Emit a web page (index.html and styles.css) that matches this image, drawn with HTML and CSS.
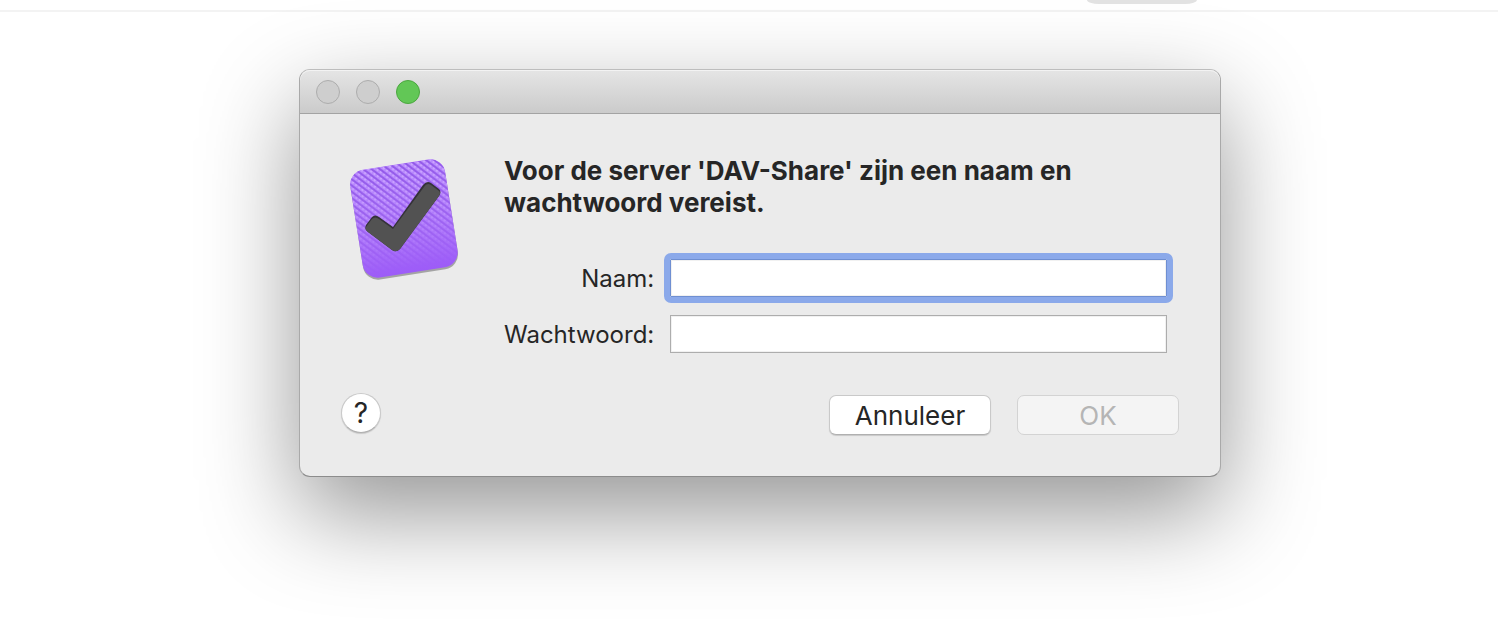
FILE: index.html
```html
<!DOCTYPE html>
<html lang="nl">
<head>
    <meta charset="UTF-8">
    <meta name="viewport" content="width=device-width, initial-scale=1.0">
    <title>Naam en wachtwoord vereist</title>
    <link rel="stylesheet" href="styles.css">
</head>
<body>
    <header class="topbar">
        <div class="tab"></div>
    </header>

    <main>
        <section class="window" role="dialog" aria-labelledby="message">
            <div class="titlebar">
                <button type="button" class="light" aria-label="Sluit" disabled></button>
                <button type="button" class="light" aria-label="Minimaliseer" disabled></button>
                <button type="button" class="light zoom" aria-label="Vergroot"></button>
            </div>

            <form class="content">
                <div class="top">
                    <svg class="app-icon" viewBox="0 0 120 130" width="120" height="130" aria-hidden="true">
                        <defs>
                            <linearGradient id="purple" x1="0" y1="0" x2="0" y2="1">
                                <stop offset="0" stop-color="#b584fb"/>
                                <stop offset="0.5" stop-color="#a96ff9"/>
                                <stop offset="1" stop-color="#9d5cf8"/>
                            </linearGradient>
                            <linearGradient id="fade" x1="0" y1="0" x2="0" y2="1">
                                <stop offset="0" stop-color="#fff"/>
                                <stop offset="0.45" stop-color="#999"/>
                                <stop offset="0.95" stop-color="#000"/>
                            </linearGradient>
                            <pattern id="weave" width="4" height="5" patternUnits="userSpaceOnUse" patternTransform="rotate(46)">
                                <rect width="4" height="2" fill="#935ae9"/>
                                <rect y="2" width="4" height="3" fill="#b88afc"/>
                                <rect y="2" width="2" height="2" fill="#cda6ff"/>
                            </pattern>
                            <mask id="fade-mask">
                                <rect x="12" y="9" width="96" height="110" fill="url(#fade)"/>
                            </mask>
                        </defs>
                        <g transform="rotate(-9 60 64)">
                            <rect x="12" y="11" width="96" height="109" rx="15" fill="#000" opacity="0.3"/>
                            <rect x="12" y="9" width="96" height="109" rx="15" fill="url(#purple)"/>
                            <rect x="12" y="9" width="96" height="109" rx="15" fill="url(#weave)" mask="url(#fade-mask)"/>
                        </g>
                        <path d="M22 70L28 62Q31 59 35 62L49 72L79 30Q83 25 87 28L95 34Q98 37 95 41L56 94Q52 98 48 95L24 77Q20 74 22 70Z" fill="#343238"/>
                        <path d="M22 72L28 64Q31 61 35 64L49 74L80 32Q83 27 87 30L95 36Q97 38 95 41L56 94Q52 98 48 95L24 77Q20 74 22 72Z" fill="#525252"/>
                    </svg>

                    <div class="details">
                        <h1 id="message">Voor de server 'DAV-Share' zijn een naam en wachtwoord vereist.</h1>
                        <div class="fields">
                            <label for="naam">Naam:</label>
                            <input type="text" id="naam" class="active">
                            <label for="wachtwoord">Wachtwoord:</label>
                            <input type="password" id="wachtwoord">
                        </div>
                    </div>
                </div>

                <div class="actions">
                    <button type="button" class="help" aria-label="Help">?</button>
                    <button type="button" class="btn">Annuleer</button>
                    <button type="submit" class="btn" disabled>OK</button>
                </div>
            </form>
        </section>
    </main>
</body>
</html>
```
FILE: styles.css
```css
* {
    box-sizing: border-box;
}

body {
    min-height: 100vh;
    margin: 0;
    background: #fff;
    color: #262626;
    font-family: Inter, "Liberation Sans", sans-serif;
}

.topbar {
    display: flex;
    justify-content: flex-end;
    height: 12px;
    padding-right: 301px;
    border-bottom: 2px solid #f3f3f3;
}

.tab {
    width: 110px;
    height: 4px;
    background: #e2e2e2;
    border-radius: 0 0 12px 12px / 0 0 4px 4px;
}

main {
    padding: 57px 277px 0 299px;
}

.window {
    border: 1px solid #a9a9a9;
    border-top-color: #bdbdbd;
    border-bottom-color: #8c8c8c;
    border-radius: 11px;
    background: #ebebeb;
    box-shadow: 0 36px 96px rgba(0, 0, 0, 0.42);
}

.titlebar {
    display: flex;
    align-items: center;
    gap: 16px;
    height: 44px;
    padding: 0 16px;
    border-bottom: 1px solid #a3a3a3;
    border-radius: 10px 10px 0 0;
    background: linear-gradient(#e5e5e5, #cbcbcb);
    box-shadow: inset 0 1px #f3f3f3;
}

.light {
    width: 24px;
    height: 24px;
    padding: 0;
    border: 1px solid #adadad;
    border-radius: 50%;
    background: #cecece;
}

.zoom {
    border-color: #4ba73f;
    background: #62c756;
}

.content {
    padding: 41px 41px 39px;
}

.top {
    display: flex;
    gap: 40px;
    padding: 0 12px 0 3px;
}

.app-icon {
    flex: none;
}

.details {
    flex: 1;
}

h1 {
    margin: 0 0 40px;
    font-size: 26px;
    line-height: 32px;
    font-weight: 700;
}

.fields {
    display: grid;
    grid-template-columns: auto 1fr;
    align-items: center;
    gap: 18px 16px;
}

label {
    font-size: 24px;
    text-align: right;
}

input {
    width: 100%;
    height: 38px;
    padding: 0 8px;
    border: 1px solid #adadad;
    border-radius: 0;
    background: #fff;
    box-shadow: inset 0 0 0 1px #f1f1f1;
    font: inherit;
    font-size: 24px;
    outline: none;
}

input.active {
    border-color: #6f8fd2;
    outline: 6px solid #8ba9ea;
    border-radius: 1px;
}

.actions {
    display: flex;
    align-items: center;
    gap: 26px;
    margin-top: 40px;
}

.help,
.btn {
    height: 40px;
    padding: 0;
    border: 1px solid #c9c9c9;
    border-bottom-color: #b0b0b0;
    background: #fff;
    color: #262626;
    font: inherit;
    font-size: 26px;
    box-shadow: 0 1px 1px rgba(0, 0, 0, 0.15);
}

.help {
    width: 40px;
    margin: 0 auto 4px 0;
    border-radius: 50%;
    font-size: 28px;
}

.btn {
    width: 162px;
    border-radius: 7px;
}

.btn:disabled {
    border-color: #d3d3d3;
    background: #f4f4f4;
    color: #b5b5b5;
    box-shadow: none;
}
```
